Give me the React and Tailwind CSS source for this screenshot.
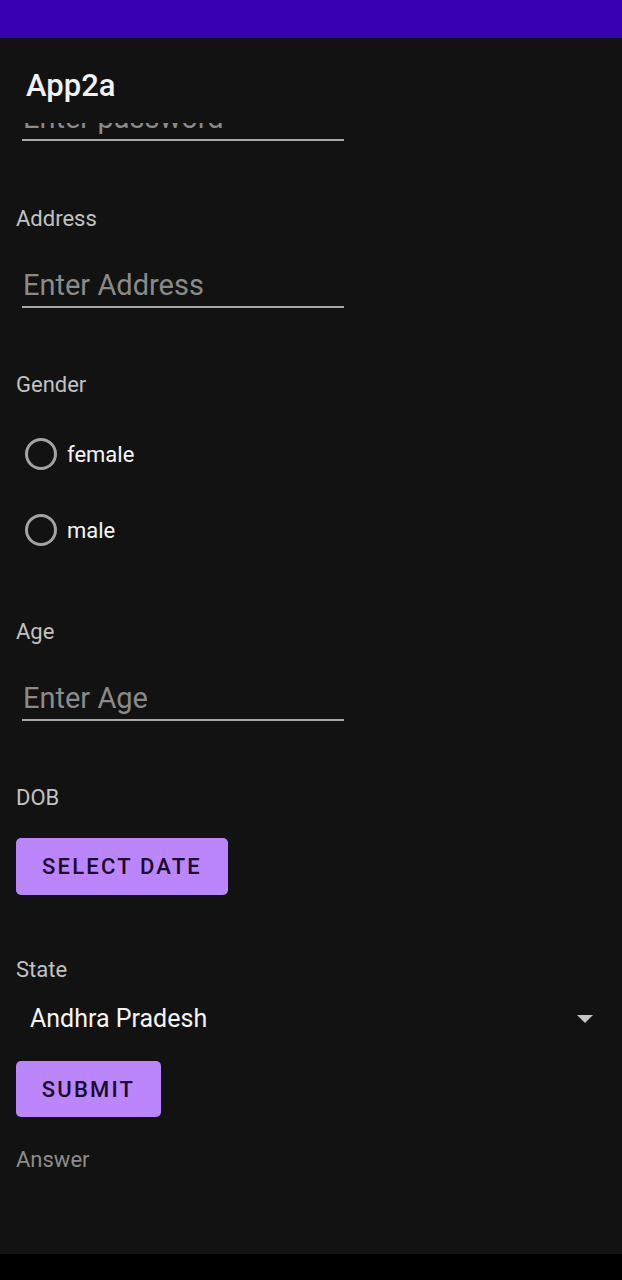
export default function App() {
  const font = { fontFamily: "Roboto, 'Noto Sans', sans-serif" };
  return (
    <div style={font} className="flex h-[1280px] w-[622px] flex-col overflow-hidden bg-[#121212]">
      {/* status bar */}
      <div className="h-[38px] shrink-0 bg-[#3700b3]" />

      {/* app bar */}
      <div className="flex h-[85px] shrink-0 items-center px-[26px] pt-[10px]">
        <span className="text-[31px] font-medium leading-none text-[#f2f2f2]">App2a</span>
      </div>

      {/* scrolled content */}
      <div className="flex flex-col">
        {/* password field, mostly scrolled out */}
        <div className="mx-[22px] flex h-[18px] w-[322px] flex-col justify-end overflow-hidden border-b-2 border-[#a8a8a8]">
          <span className="pl-[1px] pb-[1px] text-[29px] leading-[40px] text-[#8a8a8a]">Enter password</span>
        </div>

        <Label className="mt-[64px]">Address</Label>
        <Input className="mt-[32px]">Enter Address</Input>

        <Label className="mt-[63px]">Gender</Label>
        <div className="mt-[17px] flex flex-col">
          <Radio>female</Radio>
          <Radio>male</Radio>
        </div>

        <Label className="mt-[50px]">Age</Label>
        <Input className="mt-[32px]">Enter Age</Input>

        <Label className="mt-[63px]">DOB</Label>
        <button className="ml-[16px] mt-[26px] h-[57px] w-[212px] rounded-[5px] bg-[#bb86fc] text-[22px] font-medium tracking-[0.1em] text-[#1a0a2b]">
          SELECT DATE
        </button>

        <Label className="mt-[61px]">State</Label>
        <div className="flex h-[70px] items-center justify-between pl-[30px] pr-[29px]">
          <span className="text-[25px] text-[#f5f5f5]">Andhra Pradesh</span>
          <svg width="16" height="8" viewBox="0 0 16 8">
            <path d="M0 0 H16 L8 8 Z" fill="#c4c4c4" />
          </svg>
        </div>

        <button className="ml-[16px] mt-[7px] h-[56px] w-[145px] rounded-[5px] bg-[#bb86fc] text-[22px] font-medium tracking-[0.1em] text-[#1a0a2b]">
          SUBMIT
        </button>

        <span className="ml-[16px] mt-[29px] text-[22px] leading-[28px] text-[#8c8c8c]">Answer</span>
      </div>

      {/* nav bar */}
      <div className="mt-auto h-[26px] shrink-0 bg-black" />
    </div>
  );
}

function Label({ children, className = "" }) {
  return <span className={`ml-[16px] text-[22px] leading-[28px] text-[#c2c2c2] ${className}`}>{children}</span>;
}

function Input({ children, className = "" }) {
  return (
    <div className={`mx-[22px] w-[322px] border-b-2 border-[#a8a8a8] pb-[1px] ${className}`}>
      <span className="block pl-[1px] text-[29px] leading-[40px] text-[#8a8a8a]">{children}</span>
    </div>
  );
}

function Radio({ children }) {
  return (
    <div className="flex h-[76px] items-center pl-[25px]">
      <span className="h-[32px] w-[32px] rounded-full border-[3px] border-[#a3a3a3]" />
      <span className="ml-[10px] text-[22px] text-[#f5f5f5]">{children}</span>
    </div>
  );
}
